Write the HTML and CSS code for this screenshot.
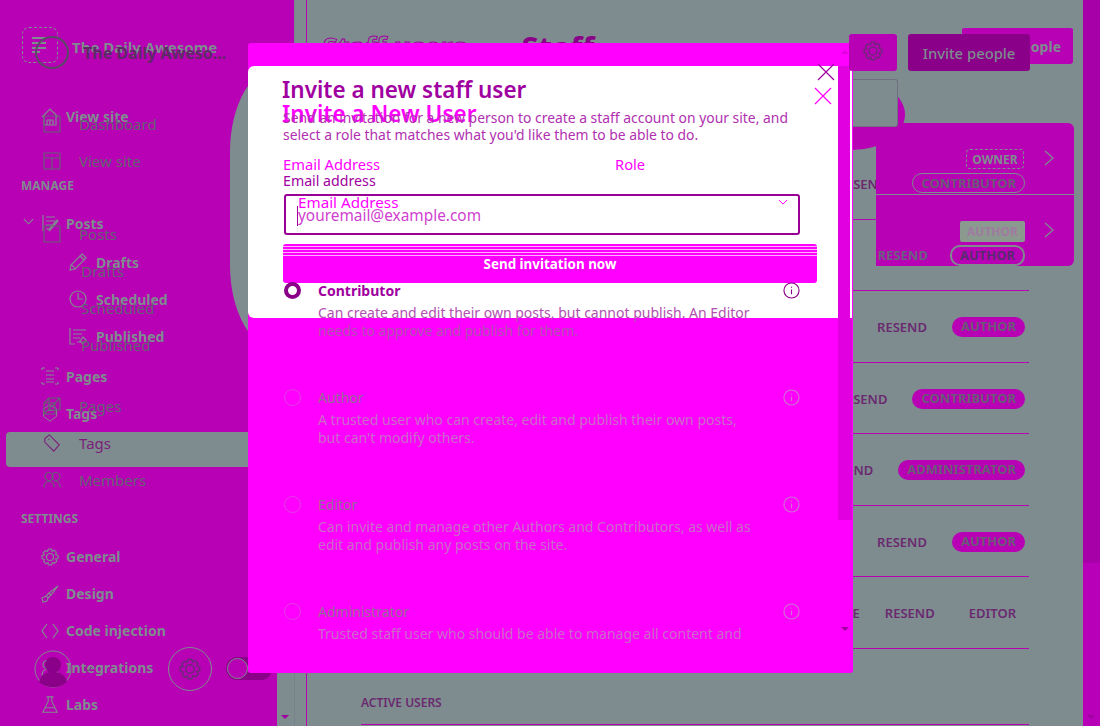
FILE: index.html
```
<!DOCTYPE html>
<html>
  <head>
    <title>Staff</title>
    <link rel="stylesheet" href="styles.css">
  </head>
  <body>
    <svg class="defs" width="0" height="0">
      <symbol id="i-house" viewBox="0 0 18 18"><path d="M1 9 9 1l8 8M3 8v9h12V8M6 12h6v5M9 12v5M6 12v5"/></symbol>
      <symbol id="i-box" viewBox="0 0 18 18"><rect x="1" y="1" width="16" height="16" rx="1"/></symbol>
      <symbol id="i-grid" viewBox="0 0 18 18"><rect x="1" y="1" width="16" height="16" rx="1"/><path d="M1 6h16M9 6v11"/></symbol>
      <symbol id="i-posts" viewBox="0 0 18 18"><path d="M2 1v16M5 3h9M5 7h9M5 11h6M5 15h3M17 7l-7 8-2 2 1-3 7-8z"/></symbol>
      <symbol id="i-pencil" viewBox="0 0 18 18"><path d="M13 1l4 4L6 16l-5 1 1-5zM11 3l4 4M3 12l3 4"/></symbol>
      <symbol id="i-clock" viewBox="0 0 18 18"><circle cx="9" cy="9" r="8"/><path d="M9 3v6h5"/></symbol>
      <symbol id="i-list" viewBox="0 0 18 18"><path d="M1 1v16h5M4 3h13M4 7h9M4 11h7M8 15h3M14 10l3 3-3 4-3-3z"/></symbol>
      <symbol id="i-pages" viewBox="0 0 18 18"><path d="M1 1h3M14 1h3M1 17h3M14 17h3M1 1v2M17 1v2M1 15v2M17 15v2M5 4h8M5 8h8M5 12h8M5 15h8"/></symbol>
      <symbol id="i-tag" viewBox="0 0 18 22"><path d="M1 6l8-5 8 5v9l-8 6-8-6zM5 8h8"/></symbol>
      <symbol id="i-cube" viewBox="0 0 18 18"><path d="M6 1h11v12H6zM1 6h11v11H1zM1 6l5-5M12 6l5-5M1 17l16-16"/></symbol>
      <symbol id="i-label" viewBox="0 0 18 20"><path d="M1 5l5-4 11 11-6 7L1 9zM5 6h1"/></symbol>
      <symbol id="i-staff" viewBox="0 0 18 14"><path d="M1 13l5-6 4 3M7 1l10 6-3 6-6-4M12 13h5"/></symbol>
      <symbol id="i-people" viewBox="0 0 18 17"><circle cx="6" cy="5" r="4"/><circle cx="13" cy="5" r="4"/><path d="M1 16c0-4 2-6 5-6s5 2 5 6M12 10c3 0 5 2 5 6"/></symbol>
      <symbol id="i-gear" viewBox="0 0 18 18"><circle cx="9" cy="9" r="3.5"/><path d="M7.500 1h3l.5 2.400 2.200-1.200 2.100 2.100L14.600 6.500 17 7.500v3l-2.400.5 1.200 2.200-2.100 2.100L11.500 14.600 10.500 17h-3L7 14.600 4.800 15.800 2.700 13.700 3.400 11.500 1 10.500v-3L3.400 7 2.200 4.800 4.300 2.700 6.500 3.400z"/></symbol>
      <symbol id="i-brush" viewBox="0 0 18 18"><path d="M17 1 8 8l2 2 7-9zM8 8l-3 3 2 2 3-3M5 11l-4 2 1 4 4-1 1-3"/></symbol>
      <symbol id="i-code" viewBox="0 0 18 18"><path d="M6 2 1 9l5 7M12 2l5 7-5 7"/></symbol>
      <symbol id="i-flask" viewBox="0 0 18 20"><path d="M5 1h8M7 1v5L1 18h16L11 6V1M4 13h10"/></symbol>
      <symbol id="i-info" viewBox="0 0 18 18"><circle cx="9" cy="9" r="8"/><path d="M9 8v5M9 5v1"/></symbol>
      <symbol id="i-close" viewBox="0 0 18 18"><path d="M1 1l16 16M17 1 1 17"/></symbol>
      <symbol id="i-chev-r" viewBox="0 0 10 16"><path d="M1 1l8 7-8 7"/></symbol>
      <symbol id="i-chev-d" viewBox="0 0 12 7"><path d="M1 1l5 5 5-5"/></symbol>
    </svg>

    <div class="app">
      <aside class="sidebar">
        <div class="nav-active"></div>

        <nav class="nav nav-back">
          <div class="brand">
            <span class="brand-mark"><svg class="brand-lines" viewBox="0 0 14 16"><path d="M0 1h14M0 6h14M0 11h14M0 15h8"/></svg></span>
            <span>The Daily Awesome</span>
          </div>
          <a class="nav-item first"><svg><use href="#i-house"/></svg>View site</a>
          <div class="nav-title manage">MANAGE</div>
          <a class="nav-item tight"><svg class="nav-chev"><use href="#i-chev-d"/></svg><svg><use href="#i-posts"/></svg>Posts</a>
          <a class="nav-item sub sub-first"><svg><use href="#i-pencil"/></svg>Drafts</a>
          <a class="nav-item sub"><svg><use href="#i-clock"/></svg>Scheduled</a>
          <a class="nav-item sub"><svg><use href="#i-list"/></svg>Published</a>
          <a class="nav-item pages"><svg><use href="#i-pages"/></svg>Pages</a>
          <a class="nav-item"><svg><use href="#i-tag"/></svg>Tags</a>
          <a class="nav-item is-dim"><svg><use href="#i-staff"/></svg>Staff</a>
          <div class="nav-title settings">SETTINGS</div>
          <a class="nav-item tight"><svg><use href="#i-gear"/></svg>General</a>
          <a class="nav-item"><svg><use href="#i-brush"/></svg>Design</a>
          <a class="nav-item"><svg><use href="#i-code"/></svg>Code injection</a>
          <a class="nav-item"><svg><use href="#i-people"/></svg>Integrations</a>
          <a class="nav-item"><svg><use href="#i-flask"/></svg>Labs</a>
        </nav>

        <nav class="nav nav-front">
          <div class="brand"><span class="brand-ring"></span><span>The Daily Aweso...</span></div>
          <a class="nav-item first"><svg><use href="#i-box"/></svg>Dashboard</a>
          <a class="nav-item"><svg><use href="#i-grid"/></svg>View site</a>
          <a class="nav-item posts"><svg><use href="#i-box"/></svg>Posts</a>
          <a class="nav-item sub">Drafts</a>
          <a class="nav-item sub">Scheduled</a>
          <a class="nav-item sub">Published</a>
          <a class="nav-item pages"><svg><use href="#i-cube"/></svg>Pages</a>
          <a class="nav-item is-tag"><svg><use href="#i-label"/></svg>Tags</a>
          <a class="nav-item"><svg><use href="#i-people"/></svg>Members</a>
        </nav>

        <div class="sidebar-foot">
          <span class="avatar">
            <svg viewBox="0 0 38 38"><circle class="avatar-ring" cx="19" cy="19" r="18"/><circle cx="19" cy="15" r="8"/><path d="M5 32c2-8 8-10 14-10s12 2 14 10c-8 7-20 7-28 0z"/></svg>
          </span>
          <svg class="foot-chev"><use href="#i-chev-d"/></svg>
          <span class="foot-gear"><svg><use href="#i-gear"/></svg></span>
          <span class="toggle"><span class="toggle-knob"></span></span>
        </div>
        <span class="sidebar-arrow"></span>
      </aside>

      <main class="main">
        <header class="page-head">
          <h1 class="title-ghost">Staff users</h1>
          <h1 class="title">Staff</h1>
          <div class="head-actions">
            <button class="btn-icon"><svg><use href="#i-gear"/></svg></button>
            <button class="btn-invite">Invite people</button>
          </div>
        </header>

        <section class="staff-list">
          <div class="staff-row"><a class="link">RESEND</a><span class="pill">CONTRIBUTOR</span></div>
          <div class="staff-row"><a class="link">RESEND</a><span class="pill">AUTHOR</span></div>
          <div class="staff-row"><a class="link">RESEND</a><span class="pill">AUTHOR</span></div>
          <div class="staff-row"><a class="link">RESEND</a><span class="pill">CONTRIBUTOR</span></div>
          <div class="staff-row"><a class="link">RESEND</a><span class="pill">ADMINISTRATOR</span></div>
          <div class="staff-row"><a class="link">RESEND</a><span class="pill">AUTHOR</span></div>
          <div class="staff-row"><a class="link">REVOKE</a><a class="link">RESEND</a><span class="plain">EDITOR</span></div>
        </section>
        <h4 class="section-title">ACTIVE USERS</h4>
        <div class="section-line"></div>
      </main>

      <div class="page-scroll"><span class="page-arrow"></span></div>
    </div>

    <!-- leftovers of the page behind the dialog -->
    <button class="ghost-invite">Invite people</button>
    <div class="ghost-blob"></div>
    <div class="ghost-panel">
      <div class="panel-row">
        <span class="tag-owner">OWNER</span>
        <svg class="panel-chev"><use href="#i-chev-r"/></svg>
        <div class="panel-under"><span class="pill-line">CONTRIBUTOR</span></div>
      </div>
      <div class="panel-row">
        <span class="tag-author">AUTHOR</span>
        <svg class="panel-chev"><use href="#i-chev-r"/></svg>
        <div class="panel-under"><a class="panel-link">RESEND</a><span class="pill-line is-dark">AUTHOR</span></div>
      </div>
    </div>
    <div class="ghost-box"></div>
    <div class="ghost-oval"></div>

    <div class="modal">
      <div class="modal-sheet"></div>
      <div class="modal-scroll"><span class="arrow-up"></span><span class="arrow-down"></span></div>
      <svg class="modal-close"><use href="#i-close"/></svg>
      <svg class="modal-close second"><use href="#i-close"/></svg>

      <div class="modal-body">
        <h2 class="modal-title">Invite a new staff user</h2>
        <h2 class="modal-title-ghost">Invite a New User</h2>
        <p class="modal-text">Send an invitation for a new person to create a staff account on your site, and select a role that matches what you'd like them to be able to do.</p>
        <div class="label-row"><span>Email Address</span><span>Role</span></div>
        <label class="label">Email address</label>
        <div class="input">
          <span class="input-ghost">Email Address</span>
          <span class="input-value">youremail@example.com</span>
          <svg class="input-chev"><use href="#i-chev-d"/></svg>
        </div>
        <button class="btn-send">Send invitation now</button>

        <div class="roles">
          <div class="role is-on">
            <span class="radio"></span>
            <div class="role-main">
              <div class="role-name">Contributor</div>
              <div class="role-desc">Can create and edit their own posts, but cannot publish. An Editor needs to approve and publish for them.</div>
            </div>
            <svg class="role-info"><use href="#i-info"/></svg>
          </div>
          <div class="role">
            <span class="radio"></span>
            <div class="role-main">
              <div class="role-name">Author</div>
              <div class="role-desc">A trusted user who can create, edit and publish their own posts, but can't modify others.</div>
            </div>
            <svg class="role-info"><use href="#i-info"/></svg>
          </div>
          <div class="role">
            <span class="radio"></span>
            <div class="role-main">
              <div class="role-name">Editor</div>
              <div class="role-desc">Can invite and manage other Authors and Contributors, as well as edit and publish any posts on the site.</div>
            </div>
            <svg class="role-info"><use href="#i-info"/></svg>
          </div>
          <div class="role">
            <span class="radio"></span>
            <div class="role-main">
              <div class="role-name">Administrator</div>
              <div class="role-desc">Trusted staff user who should be able to manage all content and</div>
            </div>
            <svg class="role-info"><use href="#i-info"/></svg>
          </div>
        </div>
      </div>
    </div>
  </body>
</html>
```
FILE: styles.css
```
* {
  box-sizing: border-box;
}

html,
body {
  margin: 0;
  height: 726px;
  overflow: hidden;
}

body {
  position: relative;
  background-color: #7f8c8f;
  font-family: "Noto Sans", "Open Sans", sans-serif;
}

.defs {
  position: absolute;
}

svg {
  fill: none;
  stroke: currentColor;
  stroke-width: 1.2;
}

.app {
  display: flex;
  height: 726px;
}

/* sidebar */

.sidebar {
  position: relative;
  flex: none;
  width: 294px;
  height: 726px;
  background: linear-gradient(to right, #b800b4 277px, #7f8c8f 277px);
  box-shadow: 1px 0 0 #76838a;
}

.sidebar::before {
  content: "";
  position: absolute;
  top: 0;
  left: 277px;
  width: 17px;
  height: 600px;
  background-color: #b800b4;
}

.nav-active {
  position: absolute;
  top: 432px;
  left: 6px;
  width: 290px;
  height: 35px;
  border-radius: 4px;
  background-color: #7f8c8f;
}

.nav {
  display: flex;
  flex-direction: column;
}

.nav-item {
  display: flex;
  align-items: center;
  height: 37px;
  white-space: nowrap;
}

.nav-item svg {
  flex: none;
  width: 18px;
  height: 18px;
}

.brand {
  display: flex;
  align-items: center;
  height: 37px;
}

.nav-back {
  padding-top: 28px;
  color: #7f8c8f;
  font-size: 14px;
  font-weight: 700;
}

.nav-back .brand {
  font-size: 15px;
  margin-bottom: 33px;
  padding-left: 72px;
}

.brand-mark {
  position: absolute;
  top: 27px;
  left: 22px;
  width: 36px;
  height: 36px;
  border: 1px dashed #7f8c8f;
  border-radius: 7px;
}

.brand-lines {
  position: absolute;
  top: 9px;
  left: 9px;
  width: 14px;
  height: 16px;
  stroke-width: 2;
}

.nav-back .nav-item {
  padding-left: 41px;
}

.nav-back .nav-item svg {
  margin-right: 7px;
}

.nav-back .nav-item svg.nav-chev {
  position: absolute;
  left: 23px;
  width: 11px;
  height: 7px;
  margin-top: -3px;
}

.nav-back .nav-item.sub {
  padding-left: 69px;
}

.nav-back .nav-item.sub svg {
  margin-right: 9px;
}

.nav-back .is-dim {
  color: #6b5a86;
}

.nav-title {
  height: 18px;
  line-height: 18px;
  padding-left: 21px;
  font-size: 12px;
}

.manage {
  margin-top: 41.5px;
}

.settings {
  margin-top: 41.5px;
}

.tight {
  margin-top: 10px;
}

.sub-first {
  margin-top: 2px;
}

.nav-back .pages {
  margin-top: 3px;
}

.nav-front {
  position: absolute;
  top: 34.5px;
  left: 0;
  color: #636274;
  font-size: 15px;
}

.nav-front .brand {
  padding-left: 83px;
  margin-bottom: 34px;
  color: #5e2a66;
  font-size: 16px;
  font-weight: 700;
}

.brand-ring {
  position: absolute;
  top: 1.5px;
  left: 35px;
  width: 34px;
  height: 33px;
  border: 2px solid #5a4a66;
  border-radius: 50%;
}

.nav-front .nav-item {
  padding-left: 43px;
}

.nav-front .nav-item svg {
  margin-right: 18px;
}

.nav-front .nav-item.sub {
  padding-left: 81px;
}

.nav-front .posts {
  margin-top: 36px;
}

.nav-front .pages {
  margin-top: 24px;
}

.nav-front .is-tag {
  color: #7a1f7a;
}

.sidebar-foot {
  position: absolute;
  top: 647px;
  left: 0;
  width: 277px;
  height: 44px;
}

.avatar {
  position: absolute;
  top: 3px;
  left: 34px;
  width: 38px;
  height: 38px;
}

.avatar svg {
  display: block;
  width: 38px;
  height: 38px;
  fill: #8a0088;
  stroke: none;
}

.avatar svg .avatar-ring {
  fill: none;
  stroke: #7f8c8f;
  stroke-width: 1;
}

.foot-chev {
  position: absolute;
  top: 19px;
  left: 83px;
  width: 10px;
  height: 6px;
  color: #6a4272;
}

.foot-gear {
  position: absolute;
  top: 0;
  left: 168px;
  display: flex;
  align-items: center;
  justify-content: center;
  width: 44px;
  height: 44px;
  border: 1px solid #7f8c8f;
  border-radius: 50%;
  color: #6a2a78;
}

.foot-gear svg {
  width: 22px;
  height: 22px;
}

.toggle {
  position: absolute;
  top: 10px;
  left: 226px;
  width: 46px;
  height: 23px;
  border-radius: 12px;
  background-color: #8a0088;
}

.toggle-knob {
  position: absolute;
  top: 1px;
  left: 1px;
  width: 21px;
  height: 21px;
  border: 1px solid #7f8c8f;
  border-radius: 50%;
  background-color: #b800b4;
}

.sidebar-arrow,
.page-arrow {
  position: absolute;
  bottom: 7px;
  width: 0;
  height: 0;
  border-left: 4px solid transparent;
  border-right: 4px solid transparent;
  border-top: 4px solid #a000a0;
}

.sidebar-arrow {
  left: 281px;
}

/* main page */

.main {
  flex: 1;
  min-width: 0;
  margin-left: 12px;
  border-left: 1px solid #b800b4;
}

.page-head {
  display: flex;
  height: 148px;
  padding: 34px 53px 0 16px;
  color: #a000a0;
}

.title,
.title-ghost {
  margin: 0;
  font-size: 31px;
  line-height: 26px;
  font-weight: 700;
  white-space: nowrap;
}

.title {
  margin-left: 55px;
  color: #8a0088;
}

.title-ghost {
  color: #7f8c8f;
  font-size: 27px;
  -webkit-text-stroke: 1px #a000a0;
}

.head-actions {
  position: relative;
  z-index: 1;
  display: flex;
  gap: 11px;
  height: 37px;
  margin-left: auto;
}

.btn-icon,
.btn-invite {
  height: 37px;
  border: none;
  border-radius: 3px;
  font-family: inherit;
}

.btn-icon {
  width: 48px;
  padding: 0;
  background-color: #b800b4;
  color: #6a2a78;
}

.btn-icon svg {
  width: 20px;
  height: 20px;
}

.btn-invite {
  width: 122px;
  padding: 0;
  background-color: #8a0088;
  color: #7f8c8f;
  font-size: 14.800px;
  font-weight: 500;
}

.staff-row {
  display: flex;
  align-items: center;
  justify-content: flex-end;
  gap: 25px;
  height: 71.5px;
  margin: 0 54px;
  padding-top: 2px;
  border-bottom: 1px solid #b800b4;
  color: #6a2a70;
  font-size: 13px;
  font-weight: 600;
}

.pill {
  padding: 0 9px;
  height: 20px;
  line-height: 19px;
  border-radius: 10px;
  margin-right: 4px;
  background-color: #b800b4;
  color: #6a5a78;
  font-size: 13px;
  font-weight: 700;
}

.plain {
  padding: 0 9px;
  margin-right: 4px;
}

.section-title {
  margin: 46px 0 0 54px;
  color: #6a2a70;
  font-size: 12px;
  line-height: 16px;
  font-weight: 600;
}

.section-line {
  height: 1px;
  margin: 13px 54px 0;
  background-color: #b800b4;
}

.page-scroll {
  position: relative;
  flex: none;
  width: 17px;
  background: linear-gradient(#a800a8 563px, #b800b8 563px);
}

.page-arrow {
  left: 4px;
}

/* leftovers behind the dialog */

.ghost-invite {
  position: absolute;
  top: 26px;
  left: 961px;
  width: 113px;
  height: 39px;
  padding: 0 12px 0 0;
  border: 1px solid #7f8c8f;
  border-top-width: 2px;
  border-radius: 4px;
  background-color: #b800b4;
  color: #7f8c8f;
  font-family: inherit;
  font-size: 14px;
  font-weight: 700;
  text-align: right;
  overflow: hidden;
  white-space: nowrap;
}

.ghost-blob {
  position: absolute;
  top: 79px;
  left: 800px;
  width: 105px;
  height: 71px;
  border-radius: 50%;
  background-color: #b800b4;
}

.ghost-panel {
  position: absolute;
  top: 123px;
  left: 876px;
  width: 198px;
  height: 143px;
  border-radius: 0 6px 6px 0;
  background-color: #b800b4;
  color: #7f8c8f;
  font-size: 13px;
  font-weight: 700;
}

.panel-row {
  position: relative;
  height: 71.5px;
  border-bottom: 1px solid #7f8c8f;
}

.panel-row:last-child {
  border-bottom: none;
}

.tag-owner {
  position: absolute;
  top: 26px;
  right: 50px;
  width: 58px;
  height: 20px;
  line-height: 20px;
  border: 1px dashed #7f8c8f;
  border-radius: 4px;
  text-align: center;
  font-size: 12px;
}

.tag-author {
  position: absolute;
  top: 26px;
  right: 49px;
  width: 65px;
  height: 21px;
  line-height: 21px;
  background-color: #8b9a8f;
  border-radius: 2px;
  color: #a07aa0;
  text-align: center;
  font-size: 12px;
}

.panel-chev {
  position: absolute;
  top: 27px;
  left: 168px;
  width: 10px;
  height: 16px;
}

.panel-under {
  position: absolute;
  top: 50px;
  right: 49px;
  display: flex;
  align-items: center;
  gap: 22px;
}

.pill-line {
  height: 20px;
  line-height: 18px;
  padding: 0 8px;
  border: 1px solid #7f8c8f;
  border-radius: 10px;
  color: #6a5a78;
}

.pill-line.is-dark {
  height: 21px;
  line-height: 17px;
  color: #5a2a70;
  border-width: 2px;
}

.panel-link {
  color: #6a6080;
}

.ghost-box {
  position: absolute;
  top: 79px;
  left: 853px;
  width: 45px;
  height: 48px;
  border: 1px solid #6f6f80;
  border-left: none;
  border-radius: 0 3px 3px 0;
  background-color: #7f8c8f;
}

.ghost-oval {
  position: absolute;
  top: 66px;
  left: 230px;
  width: 100px;
  height: 285px;
  border-radius: 50% / 30%;
  background-color: #7f8c8f;
}

/* dialog */

.modal {
  position: absolute;
  top: 43px;
  left: 248px;
  width: 605px;
  height: 630px;
  border-radius: 3px;
  background-color: #ff00ff;
  overflow: hidden;
}

.modal-sheet {
  position: absolute;
  top: 23px;
  left: 0;
  width: 604px;
  height: 252px;
  border-radius: 6px;
  background-color: #fff;
}

.modal-scroll {
  position: absolute;
  top: 23px;
  right: 1px;
  width: 14px;
  height: 454px;
  background-color: #e000e0;
}

.modal-scroll::after {
  content: "";
  position: absolute;
  top: 0;
  right: 0;
  width: 2px;
  height: 252px;
  background-color: #fff;
}

.arrow-up,
.arrow-down {
  position: absolute;
  left: 3px;
  width: 0;
  height: 0;
  border-left: 4px solid transparent;
  border-right: 4px solid transparent;
}

.arrow-up {
  top: -16px;
  border-bottom: 4px solid #e000e0;
}

.arrow-down {
  top: 561px;
  border-top: 4px solid #a000a0;
}

.modal-close {
  position: absolute;
  top: 20px;
  left: 569px;
  width: 18px;
  height: 18px;
  color: #a000a0;
}

.modal-close.second {
  top: 44px;
  left: 566px;
  color: #ff00ff;
}

.modal-body {
  position: relative;
  padding: 35px 0 0 34px;
}

.modal-title,
.modal-title-ghost {
  margin: 0;
  font-size: 22.500px;
  line-height: 24px;
  font-weight: 600;
  color: #a000a0;
  white-space: nowrap;
}

.modal-title-ghost {
  color: #ff00ff;
}

.modal-text {
  width: 520px;
  margin: -17px 0 0 1px;
  color: #b030b0;
  font-size: 13.900px;
  line-height: 17px;
}

.label-row {
  display: flex;
  margin-top: 13px;
  margin-left: 1px;
  color: #ff00ff;
  font-size: 14.700px;
  line-height: 17px;
}

.label-row span:first-child {
  width: 332px;
}

.label {
  display: block;
  margin-left: 1px;
  color: #a000a0;
  font-size: 14.200px;
  line-height: 16px;
}

.input {
  position: relative;
  width: 516px;
  height: 41px;
  margin-top: 5px;
  margin-left: 2px;
  border: 2px solid #9a0096;
  border-radius: 3px;
}

.input-ghost {
  position: absolute;
  top: -4px;
  left: 12px;
  color: #ff00ff;
  font-size: 15.200px;
}

.input-value {
  position: absolute;
  top: 10px;
  left: 11px;
  border-left: 1px solid #a000a0;
  color: #d040d0;
  font-size: 15.400px;
  line-height: 20px;
}

.input-chev {
  position: absolute;
  top: 3px;
  left: 492px;
  width: 10px;
  height: 6px;
  color: #ff00ff;
}

.btn-send {
  display: block;
  width: 534px;
  height: 39px;
  margin-top: 9px;
  margin-left: 1px;
  padding: 0;
  border: none;
  border-radius: 3px;
  background: repeating-linear-gradient(#ff00ff 0 2px, #ffb0ff 2px 3px) top / 100% 12px no-repeat, #ff00ff;
  color: #fff;
  font-family: inherit;
  font-size: 13.400px;
  font-weight: 700;
}

.roles {
  width: 517px;
  margin-top: -1px;
  margin-left: 1px;
}

.role {
  display: flex;
  height: 107px;
  color: #a87aa8;
}

.radio {
  flex: none;
  width: 17px;
  height: 17px;
  margin-left: 1px;
  border: 1px solid #e040e0;
  border-radius: 50%;
}

.is-on .radio {
  border: 4px solid #8a0088;
}

.role-main {
  flex: 1;
  padding: 0 29px 0 17px;
}

.role-name {
  font-size: 14px;
  line-height: 18px;
  color: #966a96;
}

.is-on .role-name {
  color: #a000a0;
  font-weight: 700;
}

.role-desc {
  margin-top: 4px;
  font-size: 14px;
  line-height: 18px;
  color: #c86cc8;
}

.is-on .role-desc {
  color: #b050b0;
}

.role-info {
  flex: none;
  width: 17px;
  height: 17px;
  color: #d070d0;
}

.is-on .role-info {
  color: #8a0088;
}
```
